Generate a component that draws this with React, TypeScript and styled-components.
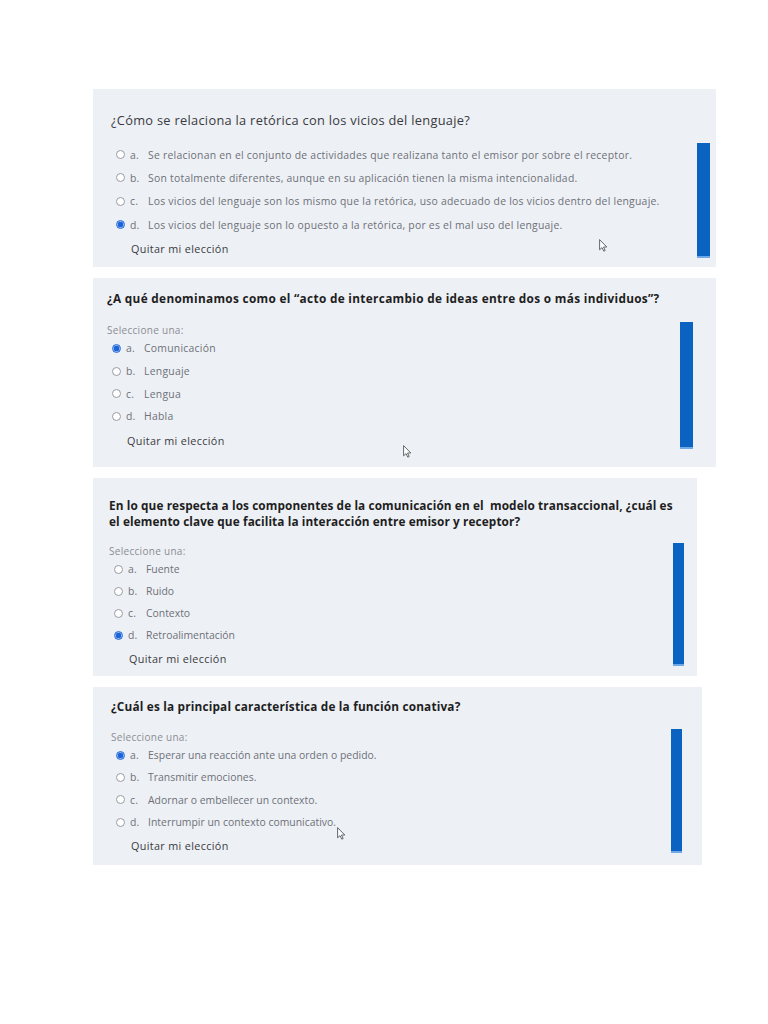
import React from 'react'
import styled, { createGlobalStyle } from 'styled-components'

const GlobalStyle = createGlobalStyle`
  html, body {
    margin: 0;
    padding: 0;
    background: #ffffff;
  }
  body {
    font-family: "Open Sans", "Liberation Sans", sans-serif;
  }
`

type Option = { letter: string; text: string; checked?: boolean }

type Question = {
  title: React.ReactNode
  bold: boolean
  select: boolean
  options: Option[]
  width: number
  height: number
  padLeft: number
  padTop: number
  titleGap: number
  spacing: number
  optSpacing: number
  rowH: number
  bar: { w: number; h: number; right: number; bottom: number }
  cursor?: { x: number; y: number }
}

const questions: Question[] = [
  {
    title: '¿Cómo se relaciona la retórica con los vicios del lenguaje?',
    bold: false,
    select: false,
    width: 623,
    height: 178,
    padLeft: 18,
    padTop: 22,
    titleGap: 14,
    spacing: 0.3,
    optSpacing: 0.25,
    rowH: 23.3,
    bar: { w: 13, h: 115, right: 6, bottom: 9 },
    cursor: { x: 506, y: 150 },
    options: [
      { letter: 'a.', text: 'Se relacionan en el conjunto de actividades que realizana tanto el emisor por sobre el receptor.' },
      { letter: 'b.', text: 'Son totalmente diferentes, aunque en su aplicación tienen la misma intencionalidad.' },
      { letter: 'c.', text: 'Los vicios del lenguaje son los mismo que la retórica, uso adecuado de los vicios dentro del lenguaje.' },
      { letter: 'd.', text: 'Los vicios del lenguaje son lo opuesto a la retórica, por es el mal uso del lenguaje.', checked: true },
    ],
  },
  {
    title: '¿A qué denominamos como el “acto de intercambio de ideas entre dos o más individuos”?',
    bold: true,
    select: true,
    width: 623,
    height: 189,
    padLeft: 14,
    padTop: 12,
    titleGap: 17,
    spacing: 0.32,
    optSpacing: 0.25,
    rowH: 22.7,
    bar: { w: 13, h: 127, right: 23, bottom: 18 },
    cursor: { x: 310, y: 167 },
    options: [
      { letter: 'a.', text: 'Comunicación', checked: true },
      { letter: 'b.', text: 'Lenguaje' },
      { letter: 'c.', text: 'Lengua' },
      { letter: 'd.', text: 'Habla' },
    ],
  },
  {
    title: (
      <>
        En lo que respecta a los componentes de la comunicación en el{'\u00a0'} modelo transaccional, ¿cuál es
        <br />
        el elemento clave que facilita la interacción entre emisor y receptor?
      </>
    ),
    bold: true,
    select: true,
    width: 604,
    height: 198,
    padLeft: 16,
    padTop: 19,
    titleGap: 15,
    spacing: 0.1,
    optSpacing: 0,
    rowH: 22,
    bar: { w: 11, h: 123, right: 22, bottom: 10 },
    options: [
      { letter: 'a.', text: 'Fuente' },
      { letter: 'b.', text: 'Ruido' },
      { letter: 'c.', text: 'Contexto' },
      { letter: 'd.', text: 'Retroalimentación', checked: true },
    ],
  },
  {
    title: '¿Cuál es la principal característica de la función conativa?',
    bold: true,
    select: true,
    width: 609,
    height: 178,
    padLeft: 18,
    padTop: 11,
    titleGap: 16,
    spacing: 0.18,
    optSpacing: 0.02,
    rowH: 22.3,
    bar: { w: 11, h: 124, right: 20, bottom: 12 },
    cursor: { x: 244, y: 140 },
    options: [
      { letter: 'a.', text: 'Esperar una reacción ante una orden o pedido.', checked: true },
      { letter: 'b.', text: 'Transmitir emociones.' },
      { letter: 'c.', text: 'Adornar o embellecer un contexto.' },
      { letter: 'd.', text: 'Interrumpir un contexto comunicativo.' },
    ],
  },
]

const Page = styled.div`
  display: flex;
  flex-direction: column;
  align-items: flex-start;
  gap: 11px;
  padding: 89px 0 160px 93px;
`

const Panel = styled.section<{ $w: number; $h: number }>`
  position: relative;
  display: flex;
  width: ${p => p.$w}px;
  height: ${p => p.$h}px;
  background: #edf0f5;
  box-sizing: border-box;
`

const Body = styled.div<{ $pl: number; $pt: number }>`
  flex: 1;
  display: flex;
  flex-direction: column;
  align-items: flex-start;
  padding: ${p => p.$pt}px 0 0 ${p => p.$pl}px;
`

const Title = styled.div<{ $bold: boolean; $gap: number; $ls: number }>`
  font-size: ${p => (p.$bold ? '11.8px' : '12.8px')};
  font-weight: ${p => (p.$bold ? 700 : 400)};
  color: ${p => (p.$bold ? '#1e1e22' : '#3a3a40')};
  line-height: ${p => (p.$bold ? '16px' : '18px')};
  white-space: nowrap;
  margin-bottom: ${p => p.$gap}px;
  letter-spacing: ${p => p.$ls}px;
`

const Hint = styled.div`
  font-size: 10px;
  line-height: 14px;
  letter-spacing: 0.3px;
  color: #8a8d94;
`

const OptionList = styled.div`
  display: flex;
  flex-direction: column;
  padding-left: 5px;
`

const Row = styled.label<{ $h: number; $ls: number }>`
  display: flex;
  align-items: center;
  height: ${p => p.$h}px;
  font-size: 10.4px;
  letter-spacing: ${p => p.$ls}px;
  color: #6e7078;
  white-space: nowrap;
`

const Radio = styled.span<{ $on?: boolean }>`
  width: 9px;
  height: 9px;
  border-radius: 50%;
  box-sizing: border-box;
  border: 1px solid ${p => (p.$on ? '#2a6fdb' : '#9a9ca3')};
  background: ${p => (p.$on ? 'radial-gradient(circle, #1c64d8 0 2.6px, #8fb4ee 3px)' : '#ffffff')};
  margin-right: 5px;
  flex-shrink: 0;
`

const Letter = styled.span`
  width: 18px;
  flex-shrink: 0;
  letter-spacing: 0.25px;
`

const Clear = styled.div`
  margin: 4px 0 0 20px;
  font-size: 10.8px;
  line-height: 18px;
  letter-spacing: 0.35px;
  color: #3a3b40;
`

const Bar = styled.div<{ $w: number; $h: number; $r: number; $b: number }>`
  align-self: flex-end;
  width: ${p => p.$w}px;
  height: ${p => p.$h}px;
  margin: 0 ${p => p.$r}px ${p => p.$b}px 0;
  background: #0b63c1;
  border-bottom: 2px solid #6fa8e6;
  box-sizing: border-box;
  flex-shrink: 0;
`

const Cursor = styled.svg`
  position: absolute;
  width: 9px;
  height: 13px;
`

const Pointer = ({ x, y }: { x: number; y: number }) => (
  <Cursor viewBox="0 0 9 13" style={{ left: x, top: y }}>
    <path d="M0.6 0.6 L0.6 10.8 L3 8.6 L4.8 12.2 L6.2 11.5 L4.5 8 L7.8 8 Z" fill="#ffffff" stroke="#55575c" strokeWidth="0.9" strokeLinejoin="round" />
  </Cursor>
)

export default function App() {
  return (
    <>
      <GlobalStyle />
      <Page>
        {questions.map((q, i) => (
          <Panel key={i} $w={q.width} $h={q.height}>
            <Body $pl={q.padLeft} $pt={q.padTop}>
              <Title $bold={q.bold} $gap={q.titleGap} $ls={q.spacing}>{q.title}</Title>
              {q.select && <Hint>Seleccione una:</Hint>}
              <OptionList>
                {q.options.map(o => (
                  <Row key={o.letter} $h={q.rowH} $ls={q.optSpacing}>
                    <Radio $on={o.checked} />
                    <Letter>{o.letter}</Letter>
                    <span>{o.text}</span>
                  </Row>
                ))}
              </OptionList>
              <Clear>Quitar mi elección</Clear>
            </Body>
            <Bar $w={q.bar.w} $h={q.bar.h} $r={q.bar.right} $b={q.bar.bottom} />
            {q.cursor && <Pointer x={q.cursor.x} y={q.cursor.y} />}
          </Panel>
        ))}
      </Page>
    </>
  )
}
